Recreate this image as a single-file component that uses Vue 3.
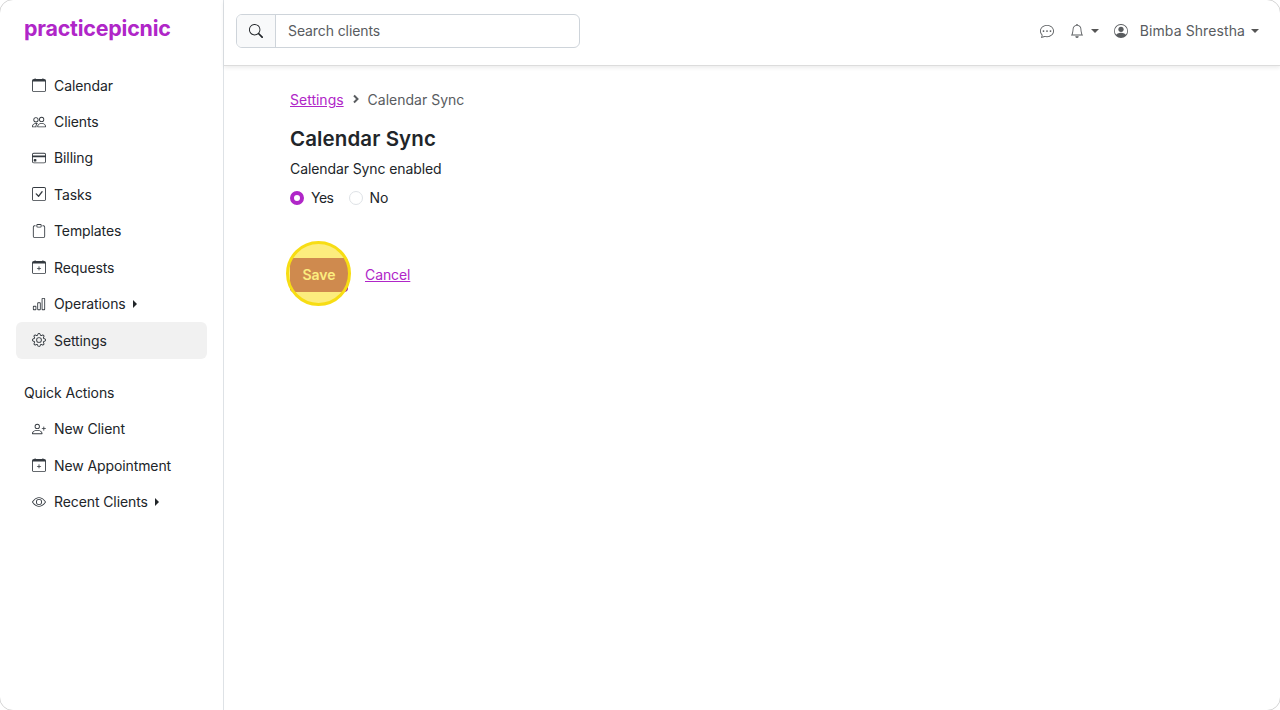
<script setup>
const CAL = 'M3.5 0a.5.5 0 0 1 .5.5V1h8V.5a.5.5 0 0 1 1 0V1h1a2 2 0 0 1 2 2v11a2 2 0 0 1-2 2H2a2 2 0 0 1-2-2V3a2 2 0 0 1 2-2h1V.5a.5.5 0 0 1 .5-.5zM1 4v10a1 1 0 0 0 1 1h12a1 1 0 0 0 1-1V4H1z'
const PLUS = 'M8 7a.5.5 0 0 1 .5.5V9H10a.5.5 0 0 1 0 1H8.5v1.5a.5.5 0 0 1-1 0V10H6a.5.5 0 0 1 0-1h1.5V7.5A.5.5 0 0 1 8 7z'
const icons = {
  calendar: [CAL],
  people: ['M15 14s1 0 1-1-1-4-5-4-5 3-5 4 1 1 1 1h8Zm-7.978-1A.261.261 0 0 1 7 12.996c.001-.264.167-1.03.76-1.72C8.312 10.629 9.282 10 11 10c1.717 0 2.687.63 3.24 1.276.593.69.758 1.457.76 1.72l-.008.002a.274.274 0 0 1-.014.002H7.022ZM11 7a2 2 0 1 0 0-4 2 2 0 0 0 0 4Zm3-2a3 3 0 1 1-6 0 3 3 0 0 1 6 0ZM6.936 9.28a5.88 5.88 0 0 0-1.23-.247A7.35 7.35 0 0 0 5 9c-4 0-5 3-5 4 0 .667.333 1 1 1h4.216A2.238 2.238 0 0 1 5 13c0-1.01.377-2.042 1.09-2.904.243-.294.526-.569.846-.816ZM4.92 10A5.493 5.493 0 0 0 4 13H1c0-.26.164-1.03.76-1.724.545-.636 1.492-1.256 3.16-1.275ZM1.5 5.5a3 3 0 1 1 6 0 3 3 0 0 1-6 0Zm3-2a2 2 0 1 0 0 4 2 2 0 0 0 0-4Z'],
  card: ['M0 4a2 2 0 0 1 2-2h12a2 2 0 0 1 2 2v8a2 2 0 0 1-2 2H2a2 2 0 0 1-2-2V4zm2-1a1 1 0 0 0-1 1v1h14V4a1 1 0 0 0-1-1H2zm13 4H1v5a1 1 0 0 0 1 1h12a1 1 0 0 0 1-1V7z', 'M2 10a1 1 0 0 1 1-1h1a1 1 0 0 1 1 1v1a1 1 0 0 1-1 1H3a1 1 0 0 1-1-1v-1z'],
  check: ['M14 1a1 1 0 0 1 1 1v12a1 1 0 0 1-1 1H2a1 1 0 0 1-1-1V2a1 1 0 0 1 1-1h12zM2 0a2 2 0 0 0-2 2v12a2 2 0 0 0 2 2h12a2 2 0 0 0 2-2V2a2 2 0 0 0-2-2H2z', 'M10.97 4.97a.75.75 0 0 1 1.071 1.05l-3.992 4.99a.75.75 0 0 1-1.08.02L4.324 8.384a.75.75 0 1 1 1.06-1.06l2.094 2.093 3.473-4.425a.235.235 0 0 1 .02-.022z'],
  clipboard: ['M4 1.5H3a2 2 0 0 0-2 2V14a2 2 0 0 0 2 2h10a2 2 0 0 0 2-2V3.5a2 2 0 0 0-2-2h-1v1h1a1 1 0 0 1 1 1V14a1 1 0 0 1-1 1H3a1 1 0 0 1-1-1V3.5a1 1 0 0 1 1-1h1v-1z', 'M9.5 1a.5.5 0 0 1 .5.5v1a.5.5 0 0 1-.5.5h-3a.5.5 0 0 1-.5-.5v-1a.5.5 0 0 1 .5-.5h3zm-3-1A1.5 1.5 0 0 0 5 1.5v1A1.5 1.5 0 0 0 6.5 4h3A1.5 1.5 0 0 0 11 2.5v-1A1.5 1.5 0 0 0 9.5 0h-3z'],
  calplus: [PLUS, CAL],
  chart: ['M4 11H2v3h2v-3zm5-4H7v7h2V7zm5-5v12h-2V2h2zm-2-1a1 1 0 0 0-1 1v12a1 1 0 0 0 1 1h2a1 1 0 0 0 1-1V2a1 1 0 0 0-1-1h-2zM6 7a1 1 0 0 1 1-1h2a1 1 0 0 1 1 1v7a1 1 0 0 1-1 1H7a1 1 0 0 1-1-1V7zm-5 4a1 1 0 0 1 1-1h2a1 1 0 0 1 1 1v3a1 1 0 0 1-1 1H2a1 1 0 0 1-1-1v-3z'],
  gear: ['M8 4.754a3.246 3.246 0 1 0 0 6.492 3.246 3.246 0 0 0 0-6.492zM5.754 8a2.246 2.246 0 1 1 4.492 0 2.246 2.246 0 0 1-4.492 0z', 'M9.796 1.343c-.527-1.79-3.065-1.79-3.592 0l-.094.319a.873.873 0 0 1-1.255.52l-.292-.16c-1.64-.892-3.433.902-2.54 2.541l.159.292a.873.873 0 0 1-.52 1.255l-.319.094c-1.79.527-1.79 3.065 0 3.592l.319.094a.873.873 0 0 1 .52 1.255l-.16.292c-.892 1.64.901 3.434 2.541 2.54l.292-.159a.873.873 0 0 1 1.255.52l.094.319c.527 1.79 3.065 1.79 3.592 0l.094-.319a.873.873 0 0 1 1.255-.52l.292.16c1.64.893 3.434-.902 2.54-2.541l-.159-.292a.873.873 0 0 1 .52-1.255l.319-.094c1.79-.527 1.79-3.065 0-3.592l-.319-.094a.873.873 0 0 1-.52-1.255l.16-.292c.893-1.64-.902-3.433-2.541-2.54l-.292.159a.873.873 0 0 1-1.255-.52l-.094-.319zm-2.633.283c.246-.835 1.428-.835 1.674 0l.094.319a1.873 1.873 0 0 0 2.693 1.115l.291-.16c.764-.415 1.6.42 1.184 1.185l-.159.292a1.873 1.873 0 0 0 1.116 2.692l.318.094c.835.246.835 1.428 0 1.674l-.319.094a1.873 1.873 0 0 0-1.115 2.693l.16.291c.415.764-.42 1.6-1.185 1.184l-.291-.159a1.873 1.873 0 0 0-2.693 1.116l-.094.318c-.246.835-1.428.835-1.674 0l-.094-.319a1.873 1.873 0 0 0-2.692-1.115l-.292.16c-.764.415-1.6-.42-1.184-1.185l.159-.291A1.873 1.873 0 0 0 1.945 8.93l-.319-.094c-.835-.246-.835-1.428 0-1.674l.319-.094A1.873 1.873 0 0 0 3.06 4.377l-.16-.292c-.415-.764.42-1.6 1.185-1.184l.292.159a1.873 1.873 0 0 0 2.692-1.115l.094-.319z'],
  personplus: ['M6 8a3 3 0 1 0 0-6 3 3 0 0 0 0 6zm2-3a2 2 0 1 1-4 0 2 2 0 0 1 4 0zm4 8c0 1-1 1-1 1H1s-1 0-1-1 1-4 6-4 6 3 6 4zm-1-.004c-.001-.246-.154-.986-.832-1.664C9.516 10.68 8.289 10 6 10c-2.29 0-3.516.68-4.168 1.332-.678.678-.83 1.418-.832 1.664h10z', 'M13.5 5a.5.5 0 0 1 .5.5V7h1.5a.5.5 0 0 1 0 1H14v1.5a.5.5 0 0 1-1 0V8h-1.5a.5.5 0 0 1 0-1H13V5.5a.5.5 0 0 1 .5-.5z'],
  eye: ['M16 8s-3-5.5-8-5.5S0 8 0 8s3 5.5 8 5.5S16 8 16 8zM1.173 8a13.133 13.133 0 0 1 1.66-2.043C4.12 4.668 5.88 3.5 8 3.5c2.12 0 3.879 1.168 5.168 2.457A13.133 13.133 0 0 1 14.828 8c-.058.087-.122.183-.195.288-.335.48-.83 1.12-1.465 1.755C11.879 11.332 10.119 12.5 8 12.5c-2.12 0-3.879-1.168-5.168-2.457A13.134 13.134 0 0 1 1.172 8z', 'M8 5.5a2.5 2.5 0 1 0 0 5 2.5 2.5 0 0 0 0-5zM4.5 8a3.5 3.5 0 1 1 7 0 3.5 3.5 0 0 1-7 0z'],
  search: ['M11.742 10.344a6.5 6.5 0 1 0-1.397 1.398h-.001c.03.04.062.078.098.115l3.85 3.85a1 1 0 0 0 1.415-1.414l-3.85-3.85a1.007 1.007 0 0 0-.115-.1zM12 6.5a5.5 5.5 0 1 1-11 0 5.5 5.5 0 0 1 11 0z'],
  chat: ['M5 8a1 1 0 1 1-2 0 1 1 0 0 1 2 0zm4 0a1 1 0 1 1-2 0 1 1 0 0 1 2 0zm3 1a1 1 0 1 0 0-2 1 1 0 0 0 0 2z', 'm2.165 15.803.02-.004c1.83-.363 2.948-.842 3.468-1.105A9.06 9.06 0 0 0 8 15c4.418 0 8-3.134 8-7s-3.582-7-8-7-8 3.134-8 7c0 1.76.743 3.37 1.97 4.6a10.437 10.437 0 0 1-.524 2.318l-.003.011a10.722 10.722 0 0 1-.244.637c-.079.186.074.394.273.362a21.673 21.673 0 0 0 .693-.125zm.8-3.108a1 1 0 0 0-.287-.801C1.618 10.83 1 9.468 1 8c0-3.192 3.004-6 7-6s7 2.808 7 6c0 3.193-3.004 6-7 6a8.06 8.06 0 0 1-2.088-.272 1 1 0 0 0-.711.074c-.387.196-1.24.57-2.634.893a10.97 10.97 0 0 0 .398-2z'],
  bell: ['M8 16a2 2 0 0 0 2-2H6a2 2 0 0 0 2 2zM8 1.918l-.797.161A4.002 4.002 0 0 0 4 6c0 .628-.134 2.197-.459 3.742-.16.767-.376 1.566-.663 2.258h10.244c-.287-.692-.502-1.49-.663-2.258C12.134 8.197 12 6.628 12 6a4.002 4.002 0 0 0-3.203-3.92L8 1.917zM14.22 12c.223.447.481.801.78 1H1c.299-.199.557-.553.78-1C2.68 10.2 3 6.88 3 6c0-2.42 1.72-4.44 4.005-4.901a1 1 0 1 1 1.99 0A5.002 5.002 0 0 1 13 6c0 .88.32 4.2 1.22 6z'],
  person: ['M11 6a3 3 0 1 1-6 0 3 3 0 0 1 6 0z', 'M0 8a8 8 0 1 1 16 0A8 8 0 0 1 0 8zm8-7a7 7 0 0 0-5.468 11.37C3.242 11.226 4.805 10 8 10s4.757 1.225 5.468 2.37A7 7 0 0 0 8 1z'],
}
const mainNav = [
  { label: 'Calendar', icon: 'calendar' },
  { label: 'Clients', icon: 'people' },
  { label: 'Billing', icon: 'card' },
  { label: 'Tasks', icon: 'check' },
  { label: 'Templates', icon: 'clipboard' },
  { label: 'Requests', icon: 'calplus' },
  { label: 'Operations', icon: 'chart', caret: true },
  { label: 'Settings', icon: 'gear', active: true },
]
const quickNav = [
  { label: 'New Client', icon: 'personplus' },
  { label: 'New Appointment', icon: 'calplus' },
  { label: 'Recent Clients', icon: 'eye', caret: true },
]
</script>

<template>
  <div class="app">
    <aside class="sidebar">
      <div class="logo">practicepicnic</div>
      <nav class="nav">
        <a v-for="item in mainNav" :key="item.label" class="nav-item" :class="{ active: item.active }">
          <svg class="ico" viewBox="0 0 16 16" fill="currentColor"><path v-for="d in icons[item.icon]" :key="d" :d="d" fill-rule="evenodd" /></svg>
          <span>{{ item.label }}</span>
          <i v-if="item.caret" class="caret-right"></i>
        </a>
      </nav>
      <div class="section">Quick Actions</div>
      <nav class="nav">
        <a v-for="item in quickNav" :key="item.label" class="nav-item">
          <svg class="ico" viewBox="0 0 16 16" fill="currentColor"><path v-for="d in icons[item.icon]" :key="d" :d="d" fill-rule="evenodd" /></svg>
          <span>{{ item.label }}</span>
          <i v-if="item.caret" class="caret-right"></i>
        </a>
      </nav>
    </aside>
    <div class="content">
      <header class="topbar">
        <div class="search">
          <span class="addon">
            <svg class="search-ico" viewBox="0 0 16 16" fill="currentColor"><path v-for="d in icons.search" :key="d" :d="d" /></svg>
          </span>
          <span class="field">Search clients</span>
        </div>
        <div class="tools">
          <svg class="tool-ico chat" viewBox="0 0 16 16" fill="currentColor"><path v-for="d in icons.chat" :key="d" :d="d" /></svg>
          <svg class="tool-ico bell" viewBox="0 0 16 16" fill="currentColor"><path v-for="d in icons.bell" :key="d" :d="d" /></svg>
          <i class="caret-down bell-caret"></i>
          <svg class="tool-ico user" viewBox="0 0 16 16" fill="currentColor"><path v-for="d in icons.person" :key="d" :d="d" fill-rule="evenodd" /></svg>
          <span class="username">Bimba Shrestha</span>
          <i class="caret-down"></i>
        </div>
      </header>
      <main class="main">
        <div class="crumbs">
          <a class="link">Settings</a>
          <svg class="crumb-sep" viewBox="0 0 8 10"><path d="M2 1.5 5.5 5 2 8.5" fill="none" stroke="currentColor" stroke-width="2" /></svg>
          <span>Calendar Sync</span>
        </div>
        <h1 class="title">Calendar Sync</h1>
        <div class="label">Calendar Sync enabled</div>
        <div class="radios">
          <span class="radio on"></span><span class="radio-text yes">Yes</span>
          <span class="radio"></span><span class="radio-text">No</span>
        </div>
        <div class="actions">
          <button class="save">Save</button>
          <span class="spot"></span>
          <a class="link cancel">Cancel</a>
        </div>
      </main>
    </div>
    <div class="frame"></div>
  </div>
</template>

<style>
html, body { margin: 0; background: #fff; }
</style>

<style scoped>
.app {
  position: relative;
  display: flex;
  width: 1280px;
  height: 710px;
  overflow: hidden;
  background: #fff;
  font-family: Inter, "Noto Sans", sans-serif;
  font-size: 14px;
  color: #212529;
}
.sidebar {
  box-sizing: border-box;
  flex: 0 0 224px;
  padding: 16px 16px 0;
  border-right: 1px solid #dee2e6;
}
.logo {
  height: 24px;
  padding-left: 8px;
  font-size: 21.4px;
  line-height: 24px;
  font-weight: 700;
  letter-spacing: -0.2px;
  color: #b026c8;
}
.nav {
  display: flex;
  flex-direction: column;
}
.sidebar > .nav:first-of-type { margin-top: 27px; }
.nav-item {
  display: flex;
  align-items: center;
  box-sizing: border-box;
  height: 36.4px;
  padding-left: 16px;
  border-radius: 6px;
  letter-spacing: -0.1px;
}
.nav-item.active { background: #f1f1f1; height: 37px; }
.ico {
  width: 14px;
  height: 14px;
  margin-right: 8px;
  flex: none;
  color: #343a40;
}
.caret-right {
  width: 0;
  height: 0;
  margin-left: 7px;
  border-left: 4px solid #212529;
  border-top: 4px solid transparent;
  border-bottom: 4px solid transparent;
}
.caret-down {
  width: 0;
  height: 0;
  border-top: 4px solid #555;
  border-left: 4px solid transparent;
  border-right: 4px solid transparent;
}
.section {
  margin-top: 25px;
  padding-left: 8px;
  height: 17px;
  line-height: 17px;
  margin-bottom: 10px;
  letter-spacing: -0.1px;
}
.content {
  flex: 1;
  min-width: 0;
  display: flex;
  flex-direction: column;
}
.topbar {
  display: flex;
  align-items: center;
  justify-content: space-between;
  box-sizing: border-box;
  flex: 0 0 66px;
  padding: 0 21px 3px 12px;
  border-bottom: 1px solid #dcdcdc;
  box-shadow: 0 2px 4px rgba(0, 0, 0, 0.075);
}
.search {
  display: flex;
  box-sizing: border-box;
  width: 344px;
  height: 34px;
  border: 1px solid #ced4da;
  border-radius: 6px;
  overflow: hidden;
}
.addon {
  display: flex;
  align-items: center;
  justify-content: center;
  flex: 0 0 38px;
  background: #f8f9fa;
  border-right: 1px solid #ced4da;
}
.search-ico { width: 14px; height: 14px; color: #212529; }
.field {
  padding-left: 12px;
  line-height: 32px;
  color: #595c5f;
  letter-spacing: -0.1px;
}
.tools {
  display: flex;
  align-items: center;
  color: #595c5f;
}
.tool-ico { width: 14px; height: 14px; }
.bell { margin-left: 16px; }
.bell-caret { margin-left: 7px; }
.user { margin-left: 15px; }
.username { margin: 0 6px 2px 12px; letter-spacing: 0.1px; }
.main {
  flex: 1;
  padding: 23px 0 0 66px;
}
.crumbs {
  display: flex;
  align-items: center;
  height: 20px;
  color: #595c5f;
}
.crumb-sep { width: 8px; height: 10px; margin: 0 8px; color: #595c5f; }
.link {
  color: #b026c8;
  text-decoration: underline;
}
.title {
  margin: 17px 0 0;
  font-size: 20.5px;
  line-height: 25px;
  font-weight: 600;
  color: #212529;
  letter-spacing: 0.1px;
}
.label {
  margin-top: 8px;
  line-height: 20px;
  letter-spacing: -0.1px;
}
.radios {
  display: flex;
  align-items: center;
  margin-top: 9px;
  height: 20px;
}
.radio {
  box-sizing: border-box;
  width: 14px;
  height: 14px;
  border: 1px solid #dee2e6;
  border-radius: 50%;
  background: #fff;
}
.radio.on { border: 4px solid #b026c8; }
.radio-text { margin: 0 15px 2px 6px; }
.radio-text.yes { margin: 0 16px 2px 7px; letter-spacing: -0.5px; }
.actions {
  position: relative;
  display: flex;
  align-items: center;
  gap: 17px;
  margin-top: 50px;
}
.save {
  width: 58px;
  height: 34px;
  padding: 0 0 2px;
  border: 0;
  border-radius: 4px;
  background: #9c2495;
  color: #fff;
  font: 600 14px Inter, "Noto Sans", sans-serif;
}
.cancel { margin-bottom: 2px; letter-spacing: -0.1px; }
.spot {
  position: absolute;
  left: -4px;
  top: -17px;
  box-sizing: border-box;
  width: 65px;
  height: 65px;
  border: 3px solid #f7dd14;
  border-radius: 50%;
  background: rgba(250, 222, 20, 0.55);
}
.frame {
  position: absolute;
  inset: -1px;
  border: 1px solid #d4d4d4;
  border-radius: 14px;
  pointer-events: none;
}
</style>
